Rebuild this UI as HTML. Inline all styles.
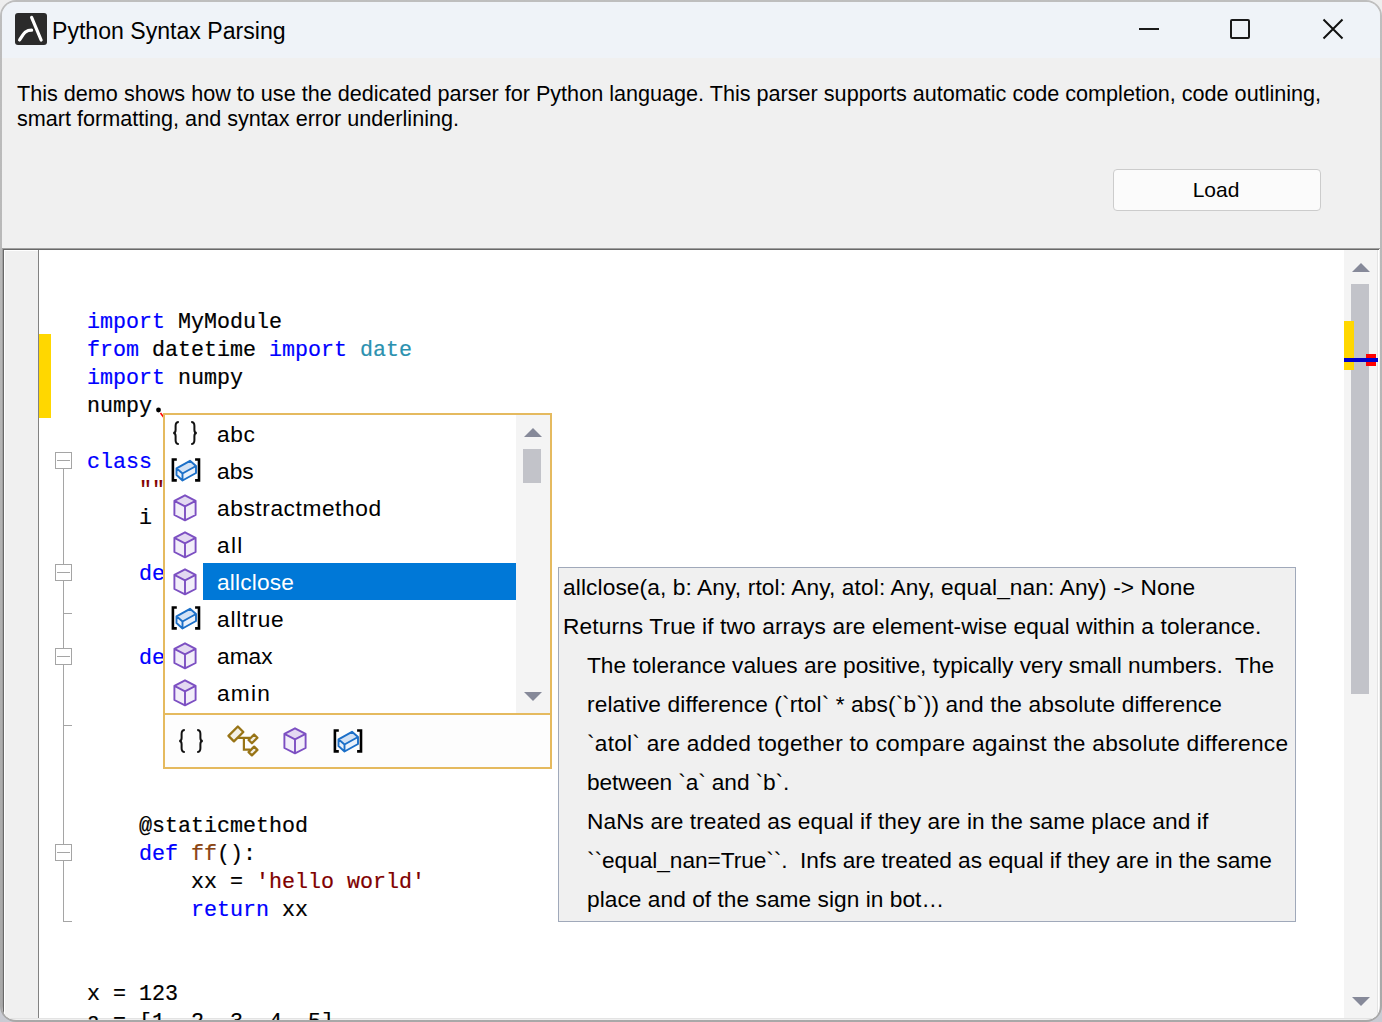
<!DOCTYPE html>
<html><head><meta charset="utf-8">
<style>
*{margin:0;padding:0;box-sizing:border-box}
html,body{width:1382px;height:1022px;overflow:hidden;background:linear-gradient(#eeeeee,#c9cbd3)}
body{position:relative;font-family:"Liberation Sans",sans-serif}
.a{position:absolute}
.code{-webkit-text-stroke:0.2px currentColor;font-family:"Liberation Mono",monospace;font-size:21.667px;white-space:pre;color:#000;line-height:28px;height:28px;padding-top:3px}
.kw{color:#0000ff}.ty{color:#2b91af}.st{color:#800000}.fn{color:#8b4513}
.li{font-size:22.7px;letter-spacing:0.55px;white-space:pre;color:#000;line-height:37px;height:37px}
.tt{font-size:22.7px;white-space:pre;color:#000;line-height:39px;height:39px}
</style></head><body>
<div class="a" style="left:0;top:0;width:1382px;height:1022px;border-radius:16px;background:linear-gradient(#bebebe,#a8a8a8)"></div>
<div class="a" style="left:0;top:0;width:1382px;height:1022px;clip-path:inset(2px round 14px);overflow:hidden">
<div class="a" style="left:0;top:0;width:1382px;height:1022px;background:#f0f0f0"></div>
<div class="a" style="left:0;top:0;width:1382px;height:58px;background:#eff3f8"></div>
<svg class="a" style="left:15px;top:13px" width="32" height="32" viewBox="0 0 32 32">
  <rect x="0" y="0" width="32" height="32" rx="3" fill="#2b2b2b"/>
  <path d="M16.6 4.4 L26.1 27" stroke="#fff" stroke-width="3.2" stroke-linecap="round" fill="none"/>
  <path d="M4.6 27 C6.5 24 8.5 20.5 10.5 19 C12.5 17.5 14.5 17.2 16.6 17.2" stroke="#fff" stroke-width="3.2" stroke-linecap="round" fill="none"/>
</svg>
<div class="a" style="left:52px;top:18px;font-size:23.1px;color:#000;white-space:nowrap">Python Syntax Parsing</div>
<div class="a" style="left:1139px;top:28px;width:20px;height:2px;background:#1a1a1a"></div>
<div class="a" style="left:1230px;top:19px;width:20px;height:20px;border:2px solid #1a1a1a;border-radius:2px"></div>
<svg class="a" style="left:1320px;top:17px" width="26" height="26" viewBox="0 0 26 26">
  <path d="M3.5 2.5 L22.5 21.5 M22.5 2.5 L3.5 21.5" stroke="#111" stroke-width="2" fill="none"/>
</svg>
<div class="a" style="left:17px;top:80.5px;font-size:21.62px;line-height:25px;color:#000;white-space:nowrap">This demo shows how to use the dedicated parser for Python language. This parser supports automatic code completion, code outlining,<br>smart formatting, and syntax error underlining.</div>
<div class="a" style="left:1113px;top:169px;width:208px;height:42px;background:#fbfbfb;border:1px solid #cccccc;border-radius:4px"></div>
<div class="a" style="left:1113px;top:178px;width:206px;text-align:center;font-size:21px;color:#000">Load</div>


<div class="a" style="left:2px;top:248px;width:1378px;height:1px;background:#a0a0a0"></div>
<div class="a" style="left:3px;top:249px;width:1376px;height:1px;background:#696969"></div>
<div class="a" style="left:3px;top:249px;width:1px;height:770px;background:#696969"></div>
<div class="a" style="left:2px;top:248px;width:1px;height:772px;background:#a0a0a0"></div>
<div class="a" style="left:4px;top:250px;width:1375px;height:769px;background:#fff"></div>
<div class="a" style="left:5px;top:251px;width:33px;height:767px;background:#f0f0f0"></div>
<div class="a" style="left:38px;top:250px;width:1px;height:769px;background:#828282"></div>
<div class="a" style="left:4px;top:1018px;width:1374px;height:1px;background:#e3e3e3"></div>
<div class="a" style="left:1377px;top:250px;width:1px;height:769px;background:#e3e3e3"></div>
<div class="a" style="left:1344px;top:250px;width:33px;height:768px;background:#f4f4f4"></div>
<svg class="a" style="left:1352px;top:263px" width="18" height="9" viewBox="0 0 18 9"><path d="M0 9 L9 0 L18 9 Z" fill="#868999"/></svg>
<svg class="a" style="left:1352px;top:997px" width="18" height="9" viewBox="0 0 18 9"><path d="M0 0 L9 9 L18 0 Z" fill="#868999"/></svg>
<div class="a" style="left:1351px;top:284px;width:18px;height:410px;background:#c2c3c9"></div>
<div class="a" style="left:1344px;top:321px;width:10px;height:49px;background:#ffd700"></div>
<div class="a" style="left:1366px;top:354px;width:10px;height:12px;background:#ff0000"></div>
<div class="a" style="left:1344px;top:358px;width:34px;height:4px;background:#0000cd"></div>
<div class="a" style="left:39px;top:334px;width:12px;height:84px;background:#ffd700"></div>

<div class="a" style="left:63px;top:469px;width:1px;height:452px;background:#a5a5a5"></div>
<div class="a" style="left:63px;top:613px;width:9px;height:1px;background:#a5a5a5"></div>
<div class="a" style="left:63px;top:725px;width:9px;height:1px;background:#a5a5a5"></div>
<div class="a" style="left:63px;top:921px;width:9px;height:1px;background:#a5a5a5"></div>
<div class="a" style="left:55px;top:452px;width:17px;height:17px;border:1px solid #a5a5a5;background:#fff"></div><div class="a" style="left:57px;top:460px;width:13px;height:1px;background:#a5a5a5"></div>
<div class="a" style="left:55px;top:564px;width:17px;height:17px;border:1px solid #a5a5a5;background:#fff"></div><div class="a" style="left:57px;top:572px;width:13px;height:1px;background:#a5a5a5"></div>
<div class="a" style="left:55px;top:648px;width:17px;height:17px;border:1px solid #a5a5a5;background:#fff"></div><div class="a" style="left:57px;top:656px;width:13px;height:1px;background:#a5a5a5"></div>
<div class="a" style="left:55px;top:844px;width:17px;height:17px;border:1px solid #a5a5a5;background:#fff"></div><div class="a" style="left:57px;top:852px;width:13px;height:1px;background:#a5a5a5"></div>
<div class="code a" style="left:87px;top:306px"><span class="kw">import</span> MyModule</div>
<div class="code a" style="left:87px;top:334px"><span class="kw">from</span> datetime <span class="kw">import</span> <span class="ty">date</span></div>
<div class="code a" style="left:87px;top:362px"><span class="kw">import</span> numpy</div>
<div class="code a" style="left:87px;top:390px">numpy</div>
<div class="code a" style="left:87px;top:446px"><span class="kw">class</span> MyClass:</div>
<div class="code a" style="left:87px;top:474px">    <span class="st">&quot;&quot;&quot;A simple class&quot;&quot;&quot;</span></div>
<div class="code a" style="left:87px;top:502px">    i = 12345</div>
<div class="code a" style="left:87px;top:558px">    <span class="kw">def</span> <span class="fn">__init__</span>(self):</div>
<div class="code a" style="left:87px;top:586px">        self.data = []</div>
<div class="code a" style="left:87px;top:642px">    <span class="kw">def</span> <span class="fn">f</span>(self):</div>
<div class="code a" style="left:87px;top:670px">        <span class="kw">return</span> <span class="st">&#x27;hello world&#x27;</span></div>
<div class="code a" style="left:87px;top:810px">    @staticmethod</div>
<div class="code a" style="left:87px;top:838px">    <span class="kw">def</span> <span class="fn">ff</span>():</div>
<div class="code a" style="left:87px;top:866px">        xx = <span class="st">&#x27;hello world&#x27;</span></div>
<div class="code a" style="left:87px;top:894px">        <span class="kw">return</span> xx</div>
<div class="code a" style="left:87px;top:978px">x = 123</div>
<div class="code a" style="left:87px;top:1006px">a = [1, 2, 3, 4, 5]</div>
<svg class="a" style="left:154px;top:405px" width="9" height="9"><circle cx="4.5" cy="5" r="2.4" fill="#000"/></svg>
<svg class="a" style="left:159px;top:412px" width="6" height="7"><path d="M1.5 1 L4.5 5" stroke="#ff0000" stroke-width="1.5"/></svg>
<div class="a" style="left:163px;top:413px;width:389px;height:356px;border:2px solid #e5ba5f;background:#fdfdfd"></div>
<div class="a" style="left:165px;top:415px;width:351px;height:298px;background:#fff"></div>
<div class="a" style="left:516px;top:415px;width:34px;height:298px;background:#f4f4f4"></div>
<div class="a" style="left:165px;top:713px;width:385px;height:2px;background:#e5ba5f"></div>
<svg class="a" style="left:524px;top:428px" width="18" height="9" viewBox="0 0 18 9"><path d="M0 9 L9 0 L18 9 Z" fill="#868999"/></svg>
<svg class="a" style="left:524px;top:692px" width="18" height="9" viewBox="0 0 18 9"><path d="M0 0 L9 9 L18 0 Z" fill="#868999"/></svg>
<div class="a" style="left:523px;top:449px;width:18px;height:34px;background:#c2c3c9"></div>
<div class="a" style="left:203px;top:563px;width:313px;height:37px;background:#0078d7"></div>

<div class="li a" style="left:217px;top:416px;color:#000;letter-spacing:0.65px">abc</div>
<svg class="a" style="left:172px;top:421px" width="26" height="24" viewBox="0 0 26 24">
<path d="M6.8 1 C4.3 1 3.6 2.3 3.6 4.8 L3.6 9 C3.6 11 2.7 12 1.2 12 C2.7 12 3.6 13 3.6 15 L3.6 19.2 C3.6 21.7 4.3 23 6.8 23" stroke="#111" stroke-width="2" fill="none"/>
<path d="M19.2 1 C21.7 1 22.4 2.3 22.4 4.8 L22.4 9 C22.4 11 23.3 12 24.8 12 C23.3 12 22.4 13 22.4 15 L22.4 19.2 C22.4 21.7 21.7 23 19.2 23" stroke="#111" stroke-width="2" fill="none"/>
</svg>
<div class="li a" style="left:217px;top:453px;color:#000;letter-spacing:0.05px">abs</div>
<svg class="a" style="left:170px;top:458px" width="32" height="25" viewBox="0 0 32 25">
<path d="M6.8 1.5 L2.9 1.5 L2.9 22.4 L6.8 22.4 M25.1 1.5 L29 1.5 L29 22.4 L25.1 22.4" stroke="#000" stroke-width="2.6" fill="none"/>
<path d="M6.5 10.3 L20 2.8 L26 8 L12.5 15.5 Z" fill="#d3e2f5"/>
<path d="M6.5 10.3 L12.5 15.5 L12.5 22.5 L6.5 17 Z M12.5 15.5 L26 8 L26 15 L12.5 22.5 Z" fill="#eaf1fb"/>
<path d="M6.5 10.3 L20 2.8 L26 8 L26 15 L12.5 22.5 L6.5 17 Z M6.5 10.3 L12.5 15.5 L26 8 M12.5 15.5 L12.5 22.5" stroke="#1b6fc8" stroke-width="1.9" fill="none" stroke-linejoin="round"/>
</svg>
<div class="li a" style="left:217px;top:490px;color:#000;letter-spacing:0.59px">abstractmethod</div>
<svg class="a" style="left:172px;top:494px" width="26" height="28" viewBox="0 0 26 28">
<path d="M13 1.3 L23.6 6.9 L13 12.3 L2.4 6.9 Z" fill="#e3d9f1"/>
<path d="M2.4 6.9 L13 12.3 L13 26.3 L2.4 21 Z M23.6 6.9 L13 12.3 L13 26.3 L23.6 21 Z" fill="#f2eef9"/>
<path d="M13 1.3 L23.6 6.9 L23.6 21 L13 26.3 L2.4 21 L2.4 6.9 Z M2.4 6.9 L13 12.3 L23.6 6.9 M13 12.3 L13 26.3" stroke="#7c4fc2" stroke-width="1.9" fill="none" stroke-linejoin="round"/>
</svg>
<div class="li a" style="left:217px;top:527px;color:#000;letter-spacing:1.35px">all</div>
<svg class="a" style="left:172px;top:531px" width="26" height="28" viewBox="0 0 26 28">
<path d="M13 1.3 L23.6 6.9 L13 12.3 L2.4 6.9 Z" fill="#e3d9f1"/>
<path d="M2.4 6.9 L13 12.3 L13 26.3 L2.4 21 Z M23.6 6.9 L13 12.3 L13 26.3 L23.6 21 Z" fill="#f2eef9"/>
<path d="M13 1.3 L23.6 6.9 L23.6 21 L13 26.3 L2.4 21 L2.4 6.9 Z M2.4 6.9 L13 12.3 L23.6 6.9 M13 12.3 L13 26.3" stroke="#7c4fc2" stroke-width="1.9" fill="none" stroke-linejoin="round"/>
</svg>
<div class="li a" style="left:217px;top:564px;color:#fff;letter-spacing:0.16px">allclose</div>
<svg class="a" style="left:172px;top:568px" width="26" height="28" viewBox="0 0 26 28">
<path d="M13 1.3 L23.6 6.9 L13 12.3 L2.4 6.9 Z" fill="#e3d9f1"/>
<path d="M2.4 6.9 L13 12.3 L13 26.3 L2.4 21 Z M23.6 6.9 L13 12.3 L13 26.3 L23.6 21 Z" fill="#f2eef9"/>
<path d="M13 1.3 L23.6 6.9 L23.6 21 L13 26.3 L2.4 21 L2.4 6.9 Z M2.4 6.9 L13 12.3 L23.6 6.9 M13 12.3 L13 26.3" stroke="#7c4fc2" stroke-width="1.9" fill="none" stroke-linejoin="round"/>
</svg>
<div class="li a" style="left:217px;top:601px;color:#000;letter-spacing:0.82px">alltrue</div>
<svg class="a" style="left:170px;top:606px" width="32" height="25" viewBox="0 0 32 25">
<path d="M6.8 1.5 L2.9 1.5 L2.9 22.4 L6.8 22.4 M25.1 1.5 L29 1.5 L29 22.4 L25.1 22.4" stroke="#000" stroke-width="2.6" fill="none"/>
<path d="M6.5 10.3 L20 2.8 L26 8 L12.5 15.5 Z" fill="#d3e2f5"/>
<path d="M6.5 10.3 L12.5 15.5 L12.5 22.5 L6.5 17 Z M12.5 15.5 L26 8 L26 15 L12.5 22.5 Z" fill="#eaf1fb"/>
<path d="M6.5 10.3 L20 2.8 L26 8 L26 15 L12.5 22.5 L6.5 17 Z M6.5 10.3 L12.5 15.5 L26 8 M12.5 15.5 L12.5 22.5" stroke="#1b6fc8" stroke-width="1.9" fill="none" stroke-linejoin="round"/>
</svg>
<div class="li a" style="left:217px;top:638px;color:#000;letter-spacing:0.02px">amax</div>
<svg class="a" style="left:172px;top:642px" width="26" height="28" viewBox="0 0 26 28">
<path d="M13 1.3 L23.6 6.9 L13 12.3 L2.4 6.9 Z" fill="#e3d9f1"/>
<path d="M2.4 6.9 L13 12.3 L13 26.3 L2.4 21 Z M23.6 6.9 L13 12.3 L13 26.3 L23.6 21 Z" fill="#f2eef9"/>
<path d="M13 1.3 L23.6 6.9 L23.6 21 L13 26.3 L2.4 21 L2.4 6.9 Z M2.4 6.9 L13 12.3 L23.6 6.9 M13 12.3 L13 26.3" stroke="#7c4fc2" stroke-width="1.9" fill="none" stroke-linejoin="round"/>
</svg>
<div class="li a" style="left:217px;top:675px;color:#000;letter-spacing:1.25px">amin</div>
<svg class="a" style="left:172px;top:679px" width="26" height="28" viewBox="0 0 26 28">
<path d="M13 1.3 L23.6 6.9 L13 12.3 L2.4 6.9 Z" fill="#e3d9f1"/>
<path d="M2.4 6.9 L13 12.3 L13 26.3 L2.4 21 Z M23.6 6.9 L13 12.3 L13 26.3 L23.6 21 Z" fill="#f2eef9"/>
<path d="M13 1.3 L23.6 6.9 L23.6 21 L13 26.3 L2.4 21 L2.4 6.9 Z M2.4 6.9 L13 12.3 L23.6 6.9 M13 12.3 L13 26.3" stroke="#7c4fc2" stroke-width="1.9" fill="none" stroke-linejoin="round"/>
</svg>
<svg class="a" style="left:178px;top:729px" width="26" height="24" viewBox="0 0 26 24">
<path d="M6.8 1 C4.3 1 3.6 2.3 3.6 4.8 L3.6 9 C3.6 11 2.7 12 1.2 12 C2.7 12 3.6 13 3.6 15 L3.6 19.2 C3.6 21.7 4.3 23 6.8 23" stroke="#111" stroke-width="2" fill="none"/>
<path d="M19.2 1 C21.7 1 22.4 2.3 22.4 4.8 L22.4 9 C22.4 11 23.3 12 24.8 12 C23.3 12 22.4 13 22.4 15 L22.4 19.2 C22.4 21.7 21.7 23 19.2 23" stroke="#111" stroke-width="2" fill="none"/>
</svg>
<svg class="a" style="left:222px;top:720px" width="40" height="40" viewBox="0 0 40 40">
<path d="M15.85 6.46 L21.33 11.94 L11.94 21.33 L6.46 15.85 Z" fill="#f3f0e6" stroke="#987416" stroke-width="2.3" stroke-linejoin="round"/>
<path d="M16 17.8 L28.2 17.8 M21.9 17.8 L21.9 29.7 L28.2 29.7" stroke="#987416" stroke-width="2.2" fill="none"/>
<path d="M32.1 14.5 L35.4 17.8 L29.9 23.3 L26.6 20 Z M32.1 26.6 L35.4 29.9 L29.9 35.4 L26.6 32.1 Z" fill="#f3f0e6" stroke="#987416" stroke-width="2.3" stroke-linejoin="round"/>
</svg>
<svg class="a" style="left:282px;top:727px" width="26" height="28" viewBox="0 0 26 28">
<path d="M13 1.3 L23.6 6.9 L13 12.3 L2.4 6.9 Z" fill="#e3d9f1"/>
<path d="M2.4 6.9 L13 12.3 L13 26.3 L2.4 21 Z M23.6 6.9 L13 12.3 L13 26.3 L23.6 21 Z" fill="#f2eef9"/>
<path d="M13 1.3 L23.6 6.9 L23.6 21 L13 26.3 L2.4 21 L2.4 6.9 Z M2.4 6.9 L13 12.3 L23.6 6.9 M13 12.3 L13 26.3" stroke="#7c4fc2" stroke-width="1.9" fill="none" stroke-linejoin="round"/>
</svg>
<svg class="a" style="left:332px;top:729px" width="32" height="25" viewBox="0 0 32 25">
<path d="M6.8 1.5 L2.9 1.5 L2.9 22.4 L6.8 22.4 M25.1 1.5 L29 1.5 L29 22.4 L25.1 22.4" stroke="#000" stroke-width="2.6" fill="none"/>
<path d="M6.5 10.3 L20 2.8 L26 8 L12.5 15.5 Z" fill="#d3e2f5"/>
<path d="M6.5 10.3 L12.5 15.5 L12.5 22.5 L6.5 17 Z M12.5 15.5 L26 8 L26 15 L12.5 22.5 Z" fill="#eaf1fb"/>
<path d="M6.5 10.3 L20 2.8 L26 8 L26 15 L12.5 22.5 L6.5 17 Z M6.5 10.3 L12.5 15.5 L26 8 M12.5 15.5 L12.5 22.5" stroke="#1b6fc8" stroke-width="1.9" fill="none" stroke-linejoin="round"/>
</svg>
<div class="a" style="left:558px;top:567px;width:738px;height:355px;border:1px solid #a0a9ba;background:#f0f0f0"></div>
<div class="tt a" style="left:563px;top:568px;letter-spacing:0.114px">allclose(a, b: Any, rtol: Any, atol: Any, equal_nan: Any) -&gt; None</div>
<div class="tt a" style="left:563px;top:607px;letter-spacing:0.125px">Returns True if two arrays are element-wise equal within a tolerance.</div>
<div class="tt a" style="left:587px;top:646px;letter-spacing:0.003px">The tolerance values are positive, typically very small numbers.  The</div>
<div class="tt a" style="left:587px;top:685px;letter-spacing:0.118px">relative difference (`rtol` * abs(`b`)) and the absolute difference</div>
<div class="tt a" style="left:587px;top:724px;letter-spacing:0.248px">`atol` are added together to compare against the absolute difference</div>
<div class="tt a" style="left:587px;top:763px;letter-spacing:-0.105px">between `a` and `b`.</div>
<div class="tt a" style="left:587px;top:802px;letter-spacing:0.074px">NaNs are treated as equal if they are in the same place and if</div>
<div class="tt a" style="left:587px;top:841px;letter-spacing:-0.052px">``equal_nan=True``.  Infs are treated as equal if they are in the same</div>
<div class="tt a" style="left:587px;top:880px;letter-spacing:0.045px">place and of the same sign in bot…</div>
</div></body></html>
